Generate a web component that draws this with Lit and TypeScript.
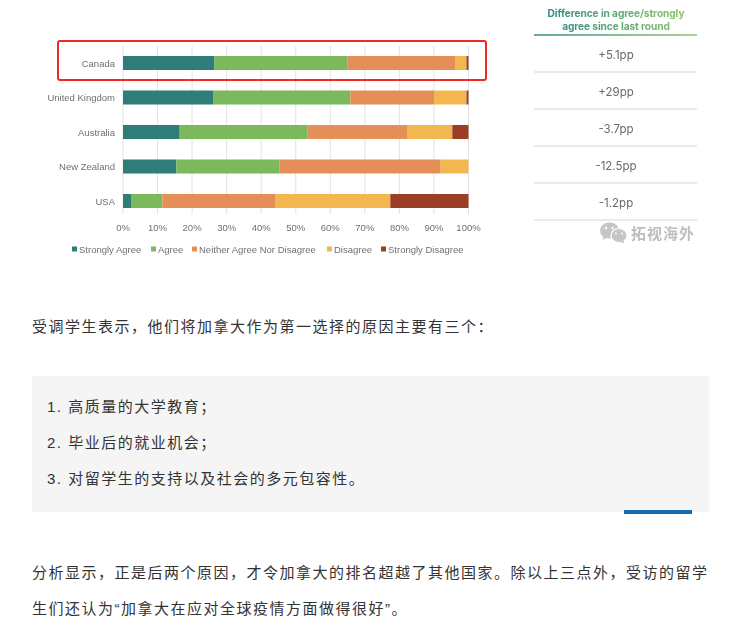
import { LitElement, html, svg, css } from "lit";
import { customElement } from "lit/decorators.js";

const COLORS = ["#2f7d78", "#7cb95c", "#e58f58", "#f2b84f", "#9a3f25"];
const X0 = 123;
const X100 = 468.5;

const ROWS = [
  { label: "Canada", y: 56, stops: [123, 214.5, 347.7, 455, 466.5, 468.5] },
  { label: "United Kingdom", y: 90.5, stops: [123, 213, 350.3, 434, 466.5, 468.5] },
  { label: "Australia", y: 125, stops: [123, 179.7, 307.7, 407.7, 452.3, 468.5] },
  { label: "New Zealand", y: 159.5, stops: [123, 176.3, 279.3, 440.7, 468.5, 468.5] },
  { label: "USA", y: 194, stops: [123, 131, 162.3, 275.7, 390.3, 468.5] },
];

const LEGEND = [
  { label: "Strongly Agree", sq: 72, tx: 79 },
  { label: "Agree", sq: 151, tx: 158 },
  { label: "Neither Agree Nor Disagree", sq: 192, tx: 199 },
  { label: "Disagree", sq: 327, tx: 334 },
  { label: "Strongly Disagree", sq: 381, tx: 388 },
];

const DIFFS = [
  { v: "+5.1pp", y: 59, line: 72 },
  { v: "+29pp", y: 96, line: 109 },
  { v: "-3.7pp", y: 133, line: 146 },
  { v: "-12.5pp", y: 170, line: 183 },
  { v: "-1.2pp", y: 207, line: 220 },
];

const TICKS = Array.from({ length: 11 }, (_, i) => i);

@customElement("app-root")
export class AppRoot extends LitElement {
  static styles = css`
    :host {
      display: block;
      width: 741px;
      height: 632px;
      overflow: hidden;
      background: #fff;
      position: relative;
      font-family: "Liberation Sans", "Noto Sans CJK SC", sans-serif;
      font-size: 15px;
      line-height: 36px;
      letter-spacing: 1.5px;
      color: #333;
    }
    .chart {
      display: block;
      width: 741px;
      height: 260px;
      filter: blur(0.7px);
    }
    .grid { stroke: #e2e2e2; stroke-width: 1; }
    .lab {
      font-family: "Liberation Sans", sans-serif;
      font-size: 9.5px;
      fill: #707070;
      letter-spacing: 0;
    }
    .end { text-anchor: end; }
    .mid { text-anchor: middle; }
    .red { fill: none; stroke: #ee2a24; stroke-width: 2; }
    .head {
      font-family: "Inter", sans-serif;
      font-size: 10.2px;
      font-weight: 700;
      letter-spacing: -0.1px;
      text-anchor: middle;
      fill: url(#headGrad);
    }
    .headline { stroke: url(#lineGrad); stroke-width: 1.6; }
    .val {
      font-family: "Inter", sans-serif;
      font-size: 11.5px;
      fill: #6a6a6a;
      letter-spacing: 0;
      text-anchor: middle;
    }
    .sep { stroke: #d6d6d6; stroke-width: 1.2; }
    .wm {
      font-family: "Noto Sans CJK SC", sans-serif;
      font-size: 15px;
      font-weight: 700;
      fill: #bdbdbd;
      letter-spacing: 1px;
    }
    .wmb { fill: #c6c6c6; }
    .wmf { fill: #c6c6c6; stroke: #fff; stroke-width: 1.2; }
    .wme { fill: #fff; }
    .body {
      padding: 49px 32px 0;
    }
    p { margin: 0; }
    .p2 { margin-top: 43px; }
    .box {
      margin-top: 31px;
      padding: 13px 15px 15px;
      background: #f5f5f5;
    }
    .accent {
      position: absolute;
      left: 624px;
      top: 510px;
      width: 68px;
      height: 4px;
      background: #0f6cb6;
    }
  `;

  render() {
    return html`
      <svg class="chart" viewBox="0 0 741 260" xmlns="http://www.w3.org/2000/svg">
        <defs>
          <linearGradient id="headGrad" gradientUnits="userSpaceOnUse" x1="548" y1="0" x2="684" y2="0">
            <stop offset="0" stop-color="#2f8f86"></stop>
            <stop offset="1" stop-color="#8cc36a"></stop>
          </linearGradient>
          <linearGradient id="lineGrad" gradientUnits="userSpaceOnUse" x1="534" y1="0" x2="697" y2="0">
            <stop offset="0" stop-color="#2f8f86"></stop>
            <stop offset="1" stop-color="#8cc36a"></stop>
          </linearGradient>
        </defs>
        ${TICKS.map((i) => {
          const x = X0 + ((X100 - X0) * i) / 10;
          return svg`
            <line class="grid" x1=${x} x2=${x} y1="46" y2="214"></line>
            <text class="lab mid" x=${x} y="231">${i * 10}%</text>`;
        })}
        ${ROWS.map(
          (r) => svg`
            <text class="lab end" x="115" y=${r.y + 10.5}>${r.label}</text>
            ${COLORS.map(
              (c, i) => svg`<rect x=${r.stops[i]} y=${r.y} width=${r.stops[i + 1] - r.stops[i]} height="14" fill=${c}></rect>`
            )}`
        )}
        <rect class="red" x="58" y="41" width="428" height="39" rx="2"></rect>
        ${LEGEND.map(
          (l, i) => svg`
            <rect x=${l.sq} y="246.5" width="5" height="5" fill=${COLORS[i]}></rect>
            <text class="lab" x=${l.tx} y="252.5">${l.label}</text>`
        )}
        <text class="head" x="616" y="17">Difference in agree/strongly</text>
        <text class="head" x="616" y="30">agree since last round</text>
        <line class="headline" x1="534" x2="697" y1="35" y2="35"></line>
        ${DIFFS.map(
          (d) => svg`
            <text class="val" x="616" y=${d.y}>${d.v}</text>
            <line class="sep" x1="534" x2="697" y1=${d.line} y2=${d.line}></line>`
        )}
        <ellipse class="wmb" cx="609.5" cy="230.5" rx="9.5" ry="8"></ellipse>
        <path class="wmb" d="M604 236l-1.5 4 5-2.5z"></path>
        <circle class="wme" cx="606" cy="228" r="1.2"></circle>
        <circle class="wme" cx="612.5" cy="228" r="1.2"></circle>
        <ellipse class="wmf" cx="619" cy="235.5" rx="8" ry="7"></ellipse>
        <path class="wmb" d="M623 240l1.5 3.5-5-2z"></path>
        <circle class="wme" cx="616" cy="233.5" r="1"></circle>
        <circle class="wme" cx="622" cy="233.5" r="1"></circle>
        <text class="wm" x="631" y="238.5">拓视海外</text>
      </svg>
      <div class="body">
        <p>受调学生表示，他们将加拿大作为第一选择的原因主要有三个：</p>
        <div class="box">
          <p>1. 高质量的大学教育；</p>
          <p>2. 毕业后的就业机会；</p>
          <p>3. 对留学生的支持以及社会的多元包容性。</p>
        </div>
        <p class="p2">分析显示，正是后两个原因，才令加拿大的排名超越了其他国家。除以上三点外，受访的留学生们还认为“加拿大在应对全球疫情方面做得很好”。</p>
      </div>
      <div class="accent"></div>
    `;
  }
}
